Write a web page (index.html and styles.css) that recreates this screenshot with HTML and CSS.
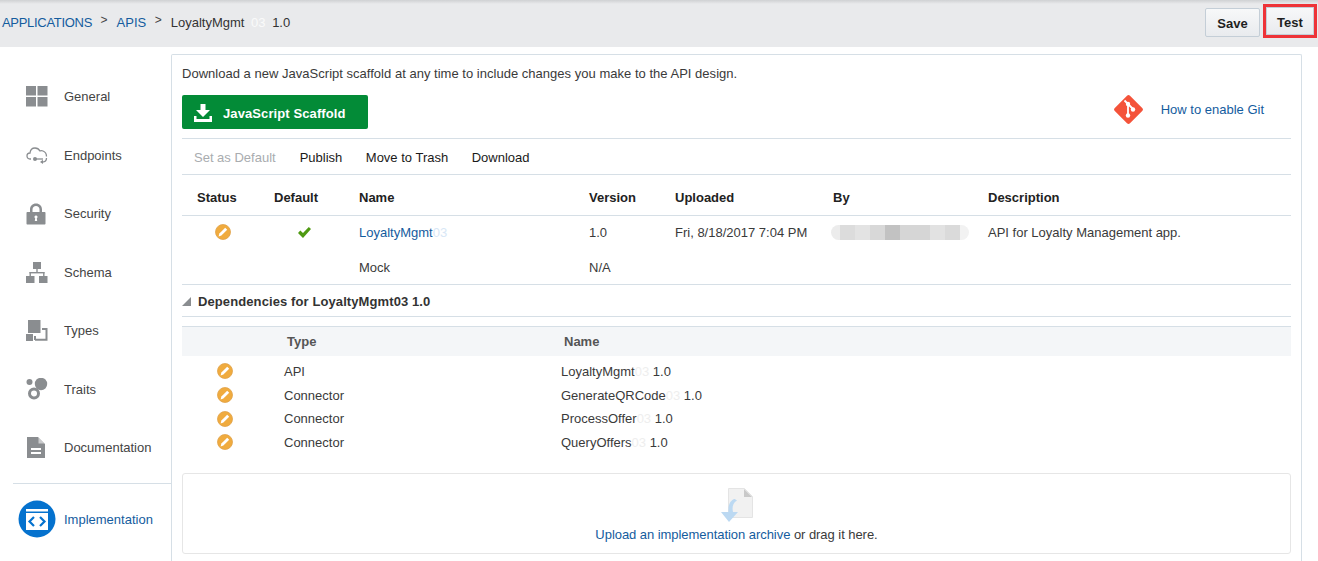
FILE: index.html
```html
<!DOCTYPE html>
<html lang="en">
<head>
<meta charset="utf-8">
<title>LoyaltyMgmt Implementation</title>
<link rel="stylesheet" href="styles.css">
</head>
<body>
<header class="topbar">
  <nav class="crumbs">
    <a class="crumb-link">APPLICATIONS</a><span class="sep">&gt;</span>
    <a class="crumb-link">APIS</a><span class="sep">&gt;</span>
    <span class="crumb-current">LoyaltyMgmt <span class="smudge smudge-crumb">03</span> 1.0</span>
  </nav>
  <div class="actions">
    <button class="btn">Save</button>
    <button class="btn btn-marked">Test</button>
  </div>
</header>
<div class="layout">
  <aside class="sidebar">
    <div class="nav-item"><span class="nav-icon"><svg width="22" height="21" viewBox="0 0 22 21"><g fill="#8a8d90"><rect x="0" y="0" width="10" height="9.500"/><rect x="11.500" y="0" width="10" height="9.500"/><rect x="0" y="11" width="10" height="9.500"/><rect x="11.500" y="11" width="10" height="9.500"/></g></svg></span>General</div>
    <div class="nav-item"><span class="nav-icon"><svg width="22" height="18" viewBox="0 0 22 18"><g fill="none" stroke="#8a8d90" stroke-width="1.300"><path d="M5 13H4C2 13 1 11.500 1 10s1-3 3-3c.3-3 2.500-5 5-5 2.300 0 4 1.200 5 3 1-.5 2-.4 3 0 2.500 1 3.500 3.500 3.500 5.500"/><path d="M8 13h9"/><path d="M20.500 12c0 2.500-1.500 4-4 4"/></g><circle cx="9" cy="13" r="2" fill="#8a8d90"/><path d="M14 16l3-2.200v4.200z" fill="#8a8d90"/></svg></span>Endpoints</div>
    <div class="nav-item"><span class="nav-icon"><svg width="20" height="22" viewBox="0 0 20 22"><path fill="#8a8d90" d="M4 9V6.500C4 3 6.500.5 10 .5s6 2.500 6 6V9h2.500c.6 0 1 .4 1 1v10.500c0 .6-.4 1-1 1h-17c-.6 0-1-.4-1-1V10c0-.6.4-1 1-1zm2.500 0h7V6.500C13.500 4.500 12 3 10 3S6.500 4.500 6.500 6.500z"/><path fill="#fff" d="M10 12.500a1.500 1.500 0 0 1 .8 2.800l.4 2.700H8.800l.4-2.700a1.500 1.500 0 0 1 .8-2.800z"/></svg></span>Security</div>
    <div class="nav-item"><span class="nav-icon"><svg width="22" height="21" viewBox="0 0 22 21"><g fill="#8a8d90"><rect x="7" y="0" width="8" height="7"/><rect x="10.300" y="7" width="1.400" height="4"/><rect x="3.500" y="10" width="15" height="1.400"/><rect x="3.500" y="10" width="1.400" height="4"/><rect x="17.100" y="10" width="1.400" height="4"/><rect x="0" y="14" width="8.500" height="7"/><rect x="13" y="14" width="8.500" height="7"/></g></svg></span>Schema</div>
    <div class="nav-item"><span class="nav-icon"><svg width="22" height="21" viewBox="0 0 22 21"><g fill="#8a8d90"><rect x="2" y="0" width="12.500" height="13"/><rect x="0" y="14" width="7" height="7"/></g><path fill="none" stroke="#8a8d90" stroke-width="2" d="M9 19.800h11.500V9H16M9 16v4"/></svg></span>Types</div>
    <div class="nav-item"><span class="nav-icon"><svg width="22" height="22" viewBox="0 0 22 22"><g fill="#8a8d90"><circle cx="3.500" cy="4" r="3"/><circle cx="15" cy="6" r="6.200"/></g><circle cx="8" cy="15.500" r="4.500" fill="#fff" stroke="#8a8d90" stroke-width="3"/></svg></span>Traits</div>
    <div class="nav-item"><span class="nav-icon"><svg width="20" height="21" viewBox="0 0 20 21"><path fill="#8a8d90" d="M1 0h11l7 7v14H1z"/><path fill="#fff" d="M5 11h10v2H5zM5 15h10v2H5z"/><path fill="#fff" d="M12.500 0.500v6h6z" opacity=".55"/></svg></span>Documentation</div>
    <hr class="nav-rule">
    <div class="nav-item nav-active"><span class="nav-badge"><svg width="38" height="38" viewBox="0 0 38 38"><circle cx="19" cy="19" r="18.500" fill="#0572ce"/><path fill="#fff" d="M8 9h22v2.500H8zM8 13h22v17H8z"/><path fill="none" stroke="#0572ce" stroke-width="2.200" d="M16 17l-4.500 4.500L16 26M22 17l4.500 4.500L22 26"/></svg></span>Implementation</div>
  </aside>
  <main class="panel">
    <p class="intro">Download a new JavaScript scaffold at any time to include changes you make to the API design.</p>
    <div class="cta-row">
      <button class="btn-primary"><svg width="20" height="18" viewBox="0 0 20 18"><path fill="#fff" d="M7.500 0h5v6H17l-7 7-7-7h4.500zM1 12h2.500v3h13v-3H19v6H1z"/></svg>JavaScript Scaffold</button>
      <div class="git">
        <svg width="29" height="29" viewBox="0 0 29 29"><path fill="#f4533a" d="M13 .8 .8 13a2.100 2.100 0 0 0 0 3L13 28.200a2.100 2.100 0 0 0 3 0L28.200 16a2.100 2.100 0 0 0 0-3L16 .8a2.100 2.100 0 0 0-3 0z"/><g fill="none" stroke="#fff" stroke-width="1.800"><path d="M10.500 5.500l9 9M14 9v11"/></g><g fill="#fff"><circle cx="14" cy="9" r="2.200"/><circle cx="19" cy="14.500" r="2.200"/><circle cx="14" cy="20.500" r="2.200"/></g></svg>
        <a class="link">How to enable Git</a>
      </div>
    </div>
    <div class="toolbar">
      <span class="tool tool-off">Set as Default</span>
      <span class="tool">Publish</span>
      <span class="tool">Move to Trash</span>
      <span class="tool">Download</span>
    </div>
    <div class="grid grid-head">
      <span class="th cell-status">Status</span><span class="th">Default</span><span class="th">Name</span><span class="th">Version</span><span class="th">Uploaded</span><span class="th">By</span><span class="th">Description</span>
    </div>
    <div class="grid grid-row">
      <span class="cell-icon"><svg class="pencil"><use href="#pencil"/></svg></span>
      <span class="cell-check"><svg width="13" height="11" viewBox="0 0 13 11"><path fill="#4f9a12" d="M0 6l2.300-2.500L5 6l5.800-6L13 2 5 11z"/></svg></span>
      <span><a class="link">LoyaltyMgmt<span class="smudge-link">03</span></a></span>
      <span>1.0</span>
      <span>Fri, 8/18/2017 7:04 PM</span>
      <span class="redact"><i class="r1"></i><i class="r2"></i><i class="r3"></i><i class="r4"></i><i class="r5"></i><i class="r6"></i><i class="r7"></i><i class="r8"></i><i class="r9"></i></span>
      <span>API for Loyalty Management app.</span>
    </div>
    <div class="grid grid-row-last">
      <span></span><span></span><span>Mock</span><span>N/A</span><span></span><span></span><span></span>
    </div>
    <h2 class="dep-title"><span class="tri"></span>Dependencies for LoyaltyMgmt03 1.0</h2>
    <div class="dep-grid dep-head"><span></span><span class="dep-th">Type</span><span class="dep-th">Name</span></div>
    <div class="dep-rows">
      <div class="dep-grid dep-row"><span class="dep-icon"><svg class="pencil"><use href="#pencil"/></svg></span><span>API</span><span>LoyaltyMgmt<span class="smudge">03</span> 1.0</span></div>
      <div class="dep-grid dep-row"><span class="dep-icon"><svg class="pencil"><use href="#pencil"/></svg></span><span>Connector</span><span>GenerateQRCode<span class="smudge">03</span> 1.0</span></div>
      <div class="dep-grid dep-row"><span class="dep-icon"><svg class="pencil"><use href="#pencil"/></svg></span><span>Connector</span><span>ProcessOffer<span class="smudge">03</span> 1.0</span></div>
      <div class="dep-grid dep-row"><span class="dep-icon"><svg class="pencil"><use href="#pencil"/></svg></span><span>Connector</span><span>QueryOffers<span class="smudge">03</span> 1.0</span></div>
    </div>
    <div class="dropzone">
      <svg width="34" height="36" viewBox="0 0 34 36"><path fill="#f1f1f1" stroke="#e4e4e4" d="M8.500 .5h16l8 8v21h-24z"/><path fill="#c9c9c9" d="M24 1l8 8h-8z"/><path fill="#bcd9f2" d="M14 11c-4 2-6 6-5.500 13H1l8 10 9-10h-5c-1-4-.5-9 4-11.500-1-.8-2-1.500-3-1.500z"/></svg>
      <div class="drop-text"><a class="link">Upload an implementation archive</a> or drag it here.</div>
    </div>
  </main>
</div>
<svg class="defs" width="0" height="0"><defs><symbol id="pencil" viewBox="0 0 16 16"><circle cx="8" cy="8" r="7.500" fill="#f0ab3e" stroke="#e0a24a" stroke-width=".8"/><path fill="#fff" d="M10.200 3.800l2 2-5.800 5.800-2.800.8.800-2.800z"/></symbol></defs></svg>
</body>
</html>
```
FILE: styles.css
```css
* { box-sizing: border-box; }
html, body { margin: 0; height: 561px; overflow: hidden; }
body {
  background: #fff;
  color: #3a3a3a;
  font-family: "Liberation Sans", Arial, sans-serif;
  font-size: 13px;
}
.link, .crumb-link { color: #145c9e; }
.defs { position: absolute; }
.topbar {
  height: 47px;
  background: linear-gradient(#cfd1d3 0, #e9eaec 4px);
  display: flex;
  align-items: flex-start;
  justify-content: space-between;
  padding: 0 2px;
}
.crumbs { display: flex; align-items: center; height: 44px; font-size: 13px; }
.crumb-link { letter-spacing: -.3px; }
.crumb-link + .sep + .crumb-link { letter-spacing: 0; }
.sep { margin: 0 9px 0 8.500px; color: #444; font-size: 12px; position: relative; top: -2px; }
.crumb-current { color: #333; white-space: pre; }
.smudge { color: #eeeeee; }
.smudge-crumb { color: #fafafa; margin: 0 3px; }
.smudge-link { color: #d8e7f6; }
.actions { display: flex; gap: 6px; padding-top: 8px; margin-right: 2px; }
.btn {
  width: 55px;
  height: 29px;
  border: 1px solid #c4ced7;
  border-radius: 2px;
  background: linear-gradient(#f7f8f9, #e9ebee);
  font: bold 13px "Liberation Sans", Arial, sans-serif;
  color: #1f1f1f;
  padding: 1px 0 0;
}
.btn-marked {
  outline: 3px solid #ee3338;
  outline-offset: 0;
  border-radius: 0;
  width: 48px;
  height: 28px;
  margin-top: -1px;
  padding-top: 2px;
}
.layout { display: flex; height: 514px; }
.sidebar { width: 171px; padding-top: 20.300px; flex: none; }
.nav-item {
  height: 58.500px;
  display: flex;
  align-items: center;
  padding-left: 26px;
  color: #444;
}
.nav-icon { width: 38px; display: flex; align-items: center; }
.nav-rule { margin: 6.500px 0 0 13px; border: 0; border-top: 1px solid #d6dfe6; }
.nav-active { color: #145c9e; padding-left: 18px; height: 70px; }
.nav-badge { width: 46px; display: flex; }
.panel {
  flex: 1;
  margin: 7px 16px 0 0;
  border: 1px solid #d6dfe6;
  border-bottom: 0;
  border-radius: 2px 2px 0 0;
  padding: 0 10px;
  height: 520px;
}
.intro { margin: 0; height: 40px; line-height: 37px; letter-spacing: .02px; }
.cta-row {
  height: 44px;
  display: flex;
  justify-content: space-between;
  border-bottom: 1px solid #d6dfe6;
  padding-right: 27px;
}
.btn-primary {
  width: 186px;
  height: 34px;
  background: #038b37;
  border: 0;
  border-radius: 2px;
  color: #fff;
  font: bold 13px "Liberation Sans", Arial, sans-serif;
  letter-spacing: .1px;
  display: flex;
  align-items: center;
  gap: 10px;
  padding: 2px 0 0 11px;
}
.git { display: flex; align-items: flex-start; gap: 18px; }
.git .link { line-height: 29px; }
.toolbar {
  height: 36px;
  border-bottom: 1px solid #d6dfe6;
  display: flex;
  align-items: center;
  gap: 23.500px;
  padding-left: 12px;
  padding-top: 1px;
}
.tool { color: #1a1a1a; }
.tool-off { color: #a9acaf; margin-right: .5px; }
.grid {
  display: grid;
  grid-template-columns: 92px 85px 230px 86px 158px 155px 1fr;
  align-items: center;
}
.grid-head { height: 41px; border-bottom: 1px solid #d6dfe6; padding-top: 5px; }
.th { font-weight: bold; color: #222; }
.cell-status { padding-left: 15px; }
.grid-row { height: 35px; padding-bottom: 3px; }
.grid-row-last { border-bottom: 1px solid #d6dfe6; height: 34px; }
.cell-icon { padding-left: 33px; display: flex; }
.cell-check { padding-left: 24px; display: flex; }
.pencil { width: 16px; height: 16px; }
.redact { display: flex; height: 15px; width: 138px; margin-left: -2px; }
.redact i { flex: 15 0 0; }
.r1 { background: #ececec; border-radius: 8px 0 0 8px; flex-grow: 9 !important; }
.r2 { background: #dcdcdc; }
.r3 { background: #e3e3e3; }
.r4 { background: #d8d8d8; }
.r5 { background: #c2c2c2; }
.r6 { background: #d6d6d6; flex-grow: 30 !important; }
.r7 { background: #e2e2e2; }
.r8 { background: #dadada; }
.r9 { background: #f2f2f2; border-radius: 0 8px 8px 0; flex-grow: 9 !important; }
.dep-title {
  margin: 0;
  height: 32px;
  font-size: 13px;
  font-weight: bold;
  letter-spacing: .1px;
  color: #333;
  display: flex;
  align-items: center;
  gap: 7px;
  border-bottom: 1px solid #d6dfe6;
  padding-top: 1px;
}
.tri {
  width: 0;
  height: 0;
  border-style: solid;
  border-width: 0 0 9px 9px;
  border-color: transparent transparent #8a8d90 transparent;
}
.dep-grid {
  display: grid;
  grid-template-columns: 102px 277px 1fr;
  align-items: center;
}
.dep-head {
  margin-top: 9px;
  height: 30px;
  background: #f4f6f8;
  border-top: 1px solid #d6dfe6;
}
.dep-th { font-weight: bold; color: #555; padding-left: 3px; }
.dep-rows { padding-top: 3.500px; }
.dep-row { height: 23.700px; }
.dep-icon { padding-left: 35px; display: flex; }
.dropzone {
  margin-top: 18.500px;
  height: 81px;
  border: 1px solid #e6e6e6;
  border-radius: 3px;
  display: flex;
  flex-direction: column;
  align-items: center;
  padding-top: 14px;
  gap: 3px;
}
.drop-text { letter-spacing: -.05px; }
```
